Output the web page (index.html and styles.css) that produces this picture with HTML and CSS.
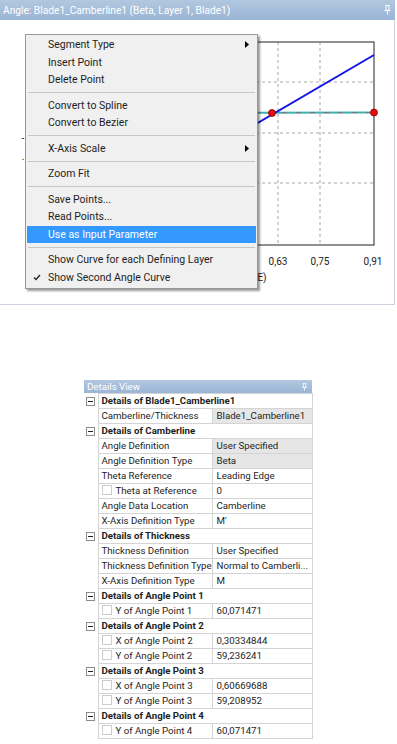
FILE: index.html
```html
<!DOCTYPE html>
<html lang="en">
  <head>
    <meta charset="UTF-8" />
    <title>Angle / Details View</title>
    <link rel="stylesheet" href="styles.css">
  </head>
  <body>
    <div class="angle-window">
      <div class="titlebar">
        <span>Angle: Blade1_Camberline1 (Beta, Layer 1, Blade1)</span>
        <svg class="pin" width="7" height="10" viewBox="0 0 7 10"><path d="M1.5 0.5h4M2 0.5v5M5 0.5v5M0.5 5.5h6M3.5 5.5v4" stroke="#fff" fill="none"/></svg>
      </div>
      <div class="chart-area">
        <svg class="chart" width="394" height="284" viewBox="0 20 394 284">
          <g class="grid">
            <line x1="58" y1="82" x2="374" y2="82" />
            <line x1="58" y1="133" x2="374" y2="133" />
            <line x1="58" y1="183" x2="374" y2="183" />
            <line x1="236" y1="42" x2="236" y2="245" />
            <line x1="278" y1="42" x2="278" y2="245" />
            <line x1="320" y1="42" x2="320" y2="245" />
          </g>
          <rect x="58" y="42" width="316" height="203" fill="none" stroke="#222" stroke-width="1" />
          <line x1="58" y1="113" x2="374" y2="112.5" stroke="#3fb0b0" stroke-width="2" />
          <line x1="58" y1="113" x2="374" y2="112.5" stroke="#b04848" stroke-width="1" stroke-dasharray="5 9" opacity="0.6" />
          <line x1="150" y1="186" x2="374" y2="55" stroke="#1414e6" stroke-width="2" />
          <circle cx="272" cy="113" r="3.5" fill="#e01010" stroke="#8a0000" stroke-width="0.8" />
          <circle cx="374" cy="112.5" r="3.5" fill="#e01010" stroke="#8a0000" stroke-width="0.8" />
          <g class="labels">
            <text x="278" y="265">0,63</text>
            <text x="320" y="265">0,75</text>
            <text x="373" y="265">0,91</text>
            <text x="262" y="281">E)</text>
            <text x="23" y="142">-</text>
            <text x="23" y="160">.</text>
          </g>
        </svg>

        <div class="context-menu">
          <div class="item">Segment Type<svg class="sub" width="4" height="7" viewBox="0 0 4 7"><path d="M0 0L4 3.5L0 7Z" fill="#000"/></svg></div>
          <div class="item">Insert Point</div>
          <div class="item">Delete Point</div>
          <div class="sep"></div>
          <div class="item">Convert to Spline</div>
          <div class="item">Convert to Bezier</div>
          <div class="sep"></div>
          <div class="item">X-Axis Scale<svg class="sub" width="4" height="7" viewBox="0 0 4 7"><path d="M0 0L4 3.5L0 7Z" fill="#000"/></svg></div>
          <div class="sep"></div>
          <div class="item">Zoom Fit</div>
          <div class="sep"></div>
          <div class="item">Save Points...</div>
          <div class="item">Read Points...</div>
          <div class="item active">Use as Input Parameter</div>
          <div class="sep"></div>
          <div class="item">Show Curve for each Defining Layer</div>
          <div class="item"><svg class="check" width="8" height="7" viewBox="0 0 8 7"><path d="M1 3.5L3 5.5L7 1" stroke="#222" stroke-width="1.3" fill="none"/></svg>Show Second Angle Curve</div>
        </div>
      </div>
    </div>

    <div class="details-view">
      <div class="panel-title">
        <span>Details View</span>
        <svg class="pin" width="7" height="10" viewBox="0 0 7 10"><path d="M1.5 0.5h4M2 0.5v5M5 0.5v5M0.5 5.5h6M3.5 5.5v4" stroke="#fff" fill="none"/></svg>
      </div>
      <table class="props">
        <colgroup><col class="c-exp"><col class="c-name"><col class="c-value"></colgroup>
        <tr class="group"><td class="exp"><span class="toggle"></span></td><td colspan="2">Details of Blade1_Camberline1</td></tr>
        <tr><td class="exp"></td><td class="name">Camberline/Thickness</td><td class="value shaded">Blade1_Camberline1</td></tr>
        <tr class="group"><td class="exp"><span class="toggle"></span></td><td colspan="2">Details of Camberline</td></tr>
        <tr><td class="exp"></td><td class="name">Angle Definition</td><td class="value shaded">User Specified</td></tr>
        <tr><td class="exp"></td><td class="name">Angle Definition Type</td><td class="value shaded">Beta</td></tr>
        <tr><td class="exp"></td><td class="name">Theta Reference</td><td class="value">Leading Edge</td></tr>
        <tr><td class="exp"></td><td class="name"><span class="box"></span>Theta at Reference</td><td class="value">0</td></tr>
        <tr><td class="exp"></td><td class="name">Angle Data Location</td><td class="value">Camberline</td></tr>
        <tr><td class="exp"></td><td class="name">X-Axis Definition Type</td><td class="value">M'</td></tr>
        <tr class="group"><td class="exp"><span class="toggle"></span></td><td colspan="2">Details of Thickness</td></tr>
        <tr><td class="exp"></td><td class="name">Thickness Definition</td><td class="value">User Specified</td></tr>
        <tr><td class="exp"></td><td class="name">Thickness Definition Type</td><td class="value">Normal to Camberli...</td></tr>
        <tr><td class="exp"></td><td class="name">X-Axis Definition Type</td><td class="value">M</td></tr>
        <tr class="group"><td class="exp"><span class="toggle"></span></td><td colspan="2">Details of Angle Point 1</td></tr>
        <tr><td class="exp"></td><td class="name"><span class="box"></span>Y of Angle Point 1</td><td class="value">60,071471</td></tr>
        <tr class="group"><td class="exp"><span class="toggle"></span></td><td colspan="2">Details of Angle Point 2</td></tr>
        <tr><td class="exp"></td><td class="name"><span class="box"></span>X of Angle Point 2</td><td class="value">0,30334844</td></tr>
        <tr><td class="exp"></td><td class="name"><span class="box"></span>Y of Angle Point 2</td><td class="value">59,236241</td></tr>
        <tr class="group"><td class="exp"><span class="toggle"></span></td><td colspan="2">Details of Angle Point 3</td></tr>
        <tr><td class="exp"></td><td class="name"><span class="box"></span>X of Angle Point 3</td><td class="value">0,60669688</td></tr>
        <tr><td class="exp"></td><td class="name"><span class="box"></span>Y of Angle Point 3</td><td class="value">59,208952</td></tr>
        <tr class="group"><td class="exp"><span class="toggle"></span></td><td colspan="2">Details of Angle Point 4</td></tr>
        <tr><td class="exp"></td><td class="name"><span class="box"></span>Y of Angle Point 4</td><td class="value">60,071471</td></tr>
      </table>
    </div>
  </body>
</html>
```

FILE: styles.css
```css
* {
  margin: 0;
  padding: 0;
  box-sizing: border-box;
}
body {
  width: 397px;
  height: 744px;
  overflow: hidden;
  background: #fff;
  font-family: Roboto, "Open Sans", sans-serif;
  color: #1e1e1e;
}

/* angle curve window */
.angle-window {
  width: 395px;
  height: 305px;
}
.titlebar {
  height: 20px;
  display: flex;
  align-items: center;
  justify-content: space-between;
  padding: 0 4px 0 3px;
  background: linear-gradient(#b2c7e0, #9bb5d5);
  color: #fff;
  font-size: 10.2px;
  white-space: nowrap;
}
.chart-area {
  position: relative;
  height: 285px;
  border-right: 1px solid #c9d2dd;
  border-bottom: 1px solid #c9d2dd;
}
.chart {
  display: block;
}
.grid line {
  stroke: #a8a8a8;
  stroke-width: 1;
  stroke-dasharray: 3 3;
}
.labels text {
  font-family: Roboto, "Open Sans", sans-serif;
  font-size: 10px;
  fill: #222;
  text-anchor: middle;
}

/* context menu */
.context-menu {
  position: absolute;
  left: 25px;
  top: 14px;
  width: 233px;
  padding: 1px 1px 2px;
  background: #f0f0f0;
  border: 1px solid #979797;
  box-shadow: 2px 2px 2px rgba(0, 0, 0, 0.4);
  font-size: 10.5px;
}
.item {
  position: relative;
  height: 17.5px;
  line-height: 17.5px;
  padding-left: 21px;
  white-space: nowrap;
}
.item.active {
  background: #3399ff;
  color: #fff;
}
.sub {
  position: absolute;
  right: 7px;
  top: 5px;
}
.check {
  position: absolute;
  left: 6px;
  top: 5px;
}
.sep {
  height: 8px;
  display: flex;
  align-items: center;
}
.sep::after {
  content: "";
  flex: 1;
  height: 1px;
  margin: 0 1px;
  background: #c6c6c6;
}

/* details view */
.details-view {
  width: 228px;
  margin: 75px 0 0 84px;
}
.panel-title {
  height: 13px;
  display: flex;
  align-items: center;
  justify-content: space-between;
  padding: 0 4px 0 3px;
  background: linear-gradient(#b2c7e0, #9bb5d5);
  color: #fff;
  font-size: 9.7px;
}
.panel-title .pin {
  transform: scale(0.8);
}
.props {
  width: 228px;
  border-collapse: collapse;
  table-layout: fixed;
  font-size: 9.7px;
}
.c-exp {
  width: 14px;
}
.c-name {
  width: 114px;
}
.c-value {
  width: 100px;
}
.props tr {
  height: 15px;
}
.props td {
  padding: 0 0 0 3px;
  line-height: 14px;
  border: 1px solid #d4d4d4;
  white-space: nowrap;
  overflow: hidden;
}
.props td.exp {
  padding: 0;
  border: none;
  text-align: center;
}
.props .group td {
  font-weight: bold;
}
.props td.value {
  padding-left: 4px;
}
.props td.shaded {
  background: #e6e6e6;
}
.toggle {
  display: inline-block;
  position: relative;
  width: 9px;
  height: 9px;
  vertical-align: middle;
  border: 1px solid #8c8c8c;
  background: #fff;
}
.toggle::after {
  content: "";
  position: absolute;
  left: 1px;
  top: 3px;
  width: 5px;
  height: 1px;
  background: #222;
}
.box {
  display: inline-block;
  width: 10px;
  height: 10px;
  margin-right: 4px;
  vertical-align: -1px;
  border: 1px solid #cdcdcd;
  background: #fff;
}
```
